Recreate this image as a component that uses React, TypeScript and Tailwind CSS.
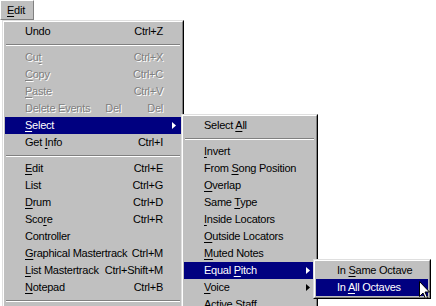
import React from "react";

type Item =
  | { sep: true }
  | { blank: true }
  | {
      sep?: false;
      blank?: false;
      label: React.ReactNode;
      key?: string;
      extra?: string;
      disabled?: boolean;
      active?: boolean;
      sub?: boolean;
    };

type Row = Exclude<Item, { sep: true } | { blank: true }>;

function U({ children }: { children: React.ReactNode }) {
  return <span className="underline underline-offset-[2px] decoration-1">{children}</span>;
}

function Arrow({ white }: { white?: boolean }) {
  return (
    <svg width="4" height="7" viewBox="0 0 4 7" className="shrink-0">
      <path d="M0 0 L4 3.5 L0 7 Z" fill={white ? "#ffffff" : "#000000"} />
    </svg>
  );
}

function MenuRow({ item, pl, pr }: { item: Row; pl: string; pr: string }) {
  const dim = item.disabled
    ? "text-[#808080] [text-shadow:1px_1px_0_#ffffff]"
    : item.active
    ? "text-white"
    : "text-black";
  return (
    <div
      className={`h-[17px] flex items-center whitespace-nowrap ${pl} ${item.sub ? "pr-[5px]" : pr} ${
        item.active ? "bg-[#000080]" : ""
      } ${dim}`}
    >
      <span className="flex-1">
        {item.label}
        {item.extra && <span className="ml-[15px]">{item.extra}</span>}
      </span>
      {item.key && <span>{item.key}</span>}
      {item.sub && <Arrow white={item.active} />}
    </div>
  );
}

function Menu({ items, className, pl, pr }: { items: Item[]; className: string; pl: string; pr: string }) {
  return (
    <div
      className={`absolute bg-[#c0c0c0] border border-t-[#dfdfdf] border-l-[#dfdfdf] border-r-black border-b-black ${className}`}
    >
      <div className="border border-t-white border-l-white border-r-[#808080] border-b-[#808080] p-px">
        {items.map((it, i) =>
          "sep" in it && it.sep ? (
            <div key={i} className="h-[9px] flex flex-col justify-center px-px">
              <div className="h-px bg-[#808080]" />
              <div className="h-px bg-white" />
            </div>
          ) : "blank" in it && it.blank ? (
            <div key={i} className="h-[17px]" />
          ) : (
            <MenuRow key={i} item={it as Row} pl={pl} pr={pr} />
          )
        )}
      </div>
    </div>
  );
}

const editItems: Item[] = [
  { label: "Undo", key: "Ctrl+Z" },
  { sep: true },
  { label: <>Cu<U>t</U></>, key: "Ctrl+X", disabled: true },
  { label: <><U>C</U>opy</>, key: "Ctrl+C", disabled: true },
  { label: <><U>P</U>aste</>, key: "Ctrl+V", disabled: true },
  { label: "Delete Events", extra: "Del", key: "Del", disabled: true },
  { label: <><U>S</U>elect</>, sub: true, active: true },
  { label: <>Get <U>I</U>nfo</>, key: "Ctrl+I" },
  { sep: true },
  { label: <><U>E</U>dit</>, key: "Ctrl+E" },
  { label: "List", key: "Ctrl+G" },
  { label: <><U>D</U>rum</>, key: "Ctrl+D" },
  { label: <>Sco<U>r</U>e</>, key: "Ctrl+R" },
  { label: "Controller" },
  { label: <><U>G</U>raphical Mastertrack</>, key: "Ctrl+M" },
  { label: <><U>L</U>ist Mastertrack</>, key: "Ctrl+Shift+M" },
  { label: <><U>N</U>otepad</>, key: "Ctrl+B" },
  { sep: true },
  { blank: true },
];

const selectItems: Item[] = [
  { label: <>Select <U>A</U>ll</> },
  { sep: true },
  { label: <><U>I</U>nvert</> },
  { label: <>From <U>S</U>ong Position</> },
  { label: <><U>O</U>verlap</> },
  { label: <>Same <U>T</U>ype</> },
  { label: <><U>I</U>nside Locators</> },
  { label: <><U>O</U>utside Locators</> },
  { label: <><U>M</U>uted Notes</> },
  { label: <>Equal <U>P</U>itch</>, sub: true, active: true },
  { label: <><U>V</U>oice</>, sub: true },
  { label: "Active Staff" },
];

const pitchItems: Item[] = [
  { label: <>In <U>S</U>ame Octave</> },
  { label: <>In <U>A</U>ll Octaves</>, active: true },
];

export default function App() {
  return (
    <div className="relative w-[436px] h-[306px] overflow-hidden bg-white font-['Liberation_Sans',Arial,sans-serif] text-[11px] tracking-[-0.25px] leading-none">
      <div className="flex h-[20px]">
        <div className="w-[34px] h-[20px] bg-[#c0c0c0] border border-t-white border-l-white border-r-[#808080] border-b-[#808080] flex items-center pl-[6px]">
          <span>
            <U>E</U>dit
          </span>
        </div>
      </div>

      <Menu items={editItems} className="left-[2px] top-[20px] w-[182px]" pl="pl-[20px]" pr="pr-[18px]" />
      <Menu items={selectItems} className="left-[181px] top-[114px] w-[137px]" pl="pl-[20px]" pr="pr-[5px]" />
      <Menu items={pitchItems} className="left-[313px] top-[259px] w-[118px]" pl="pl-[21px]" pr="pr-[5px]" />

      <svg width="12" height="19" viewBox="0 0 12 19" className="absolute left-[419px] top-[281px]">
        <path
          d="M0.5 0.5 L0.5 15.5 L4 12 L6.5 17.5 L8.5 16.5 L6 11 L10.5 11 Z"
          fill="#ffffff"
          stroke="#000000"
          strokeWidth="1"
        />
      </svg>
    </div>
  );
}
